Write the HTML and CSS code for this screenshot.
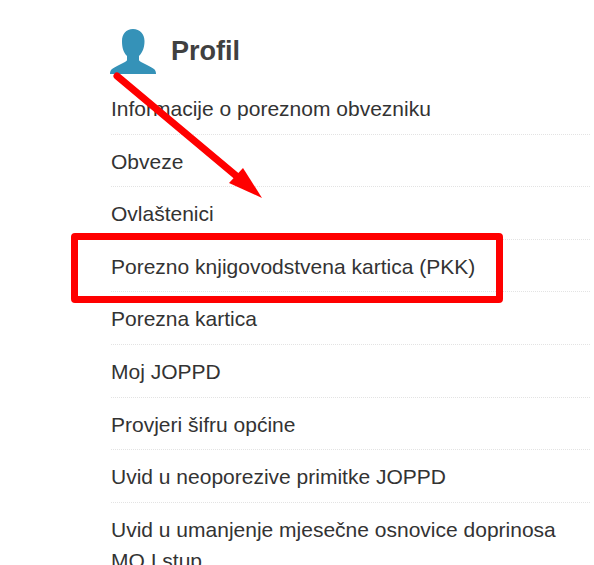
FILE: index.html
```html
<!doctype html>
<html>
  <head>
    <meta charset="UTF-8">
    <meta name="viewport" content="width=device-width, initial-scale=1.0">
    <title>Profil</title>
    <link rel="stylesheet" href="styles.css">
  </head>
  <body>
    <div class="container">
      <div class="header">
        <svg class="user-icon" viewBox="0 0 47 45" width="47" height="45">
          <path d="M23 0C16 0 12 5 12 12C12 18 13 23 17 27V31C17 32 15 33 13 34C9 36 5 38 2 40C0.500 41 0 43 0 45H46C46 43 45.500 41 44 40C41 38 37 36 33 34C31 33 29 32 29 31V27C33 23 34.500 18 34.500 12C34.500 5 30 0 23 0Z"></path>
        </svg>
        <h1>Profil</h1>
      </div>

      <ul class="menu">
        <li>Informacije o poreznom obvezniku</li>
        <li>Obveze</li>
        <li>Ovlaštenici</li>
        <li>Porezno knjigovodstvena kartica (PKK)</li>
        <li>Porezna kartica</li>
        <li>Moj JOPPD</li>
        <li>Provjeri šifru općine</li>
        <li>Uvid u neoporezive primitke JOPPD</li>
        <li>Uvid u umanjenje mjesečne osnovice doprinosa MO I stup</li>
      </ul>
    </div>

    <div class="mark-box"></div>
    <svg class="mark-arrow" viewBox="0 0 594 565" width="594" height="565">
      <line x1="117" y1="76" x2="240" y2="179"></line>
      <polygon points="262,198 229,183 243,168"></polygon>
    </svg>
  </body>
</html>
```

FILE: styles.css
```css
* {
  margin: 0;
  padding: 0;
  box-sizing: border-box;
}

html,
body {
  height: 565px;
  overflow: hidden;
}

body {
  position: relative;
  font-family: "Liberation Sans", Arial, sans-serif;
  color: #333333;
  background: #ffffff;
}

.container {
  padding: 29px 4px 0 111px;
}

.header {
  display: flex;
  align-items: center;
  height: 45px;
  margin-left: -1px;
  margin-bottom: 8px;
}

.user-icon {
  flex: none;
  margin-right: 14px;
}

.user-icon path {
  fill: #3592b8;
}

h1 {
  font-size: 27px;
  font-weight: 700;
  color: #404040;
  margin-top: -1px;
}

.menu {
  list-style: none;
}

.menu li {
  font-size: 21px;
  line-height: 31px;
  padding: 11px 0 9.600px;
  border-bottom: 1px dotted #e3e3e3;
}

.mark-box {
  position: absolute;
  left: 71px;
  top: 233px;
  width: 432px;
  height: 70px;
  border: 7px solid #ff0000;
  border-radius: 4px;
}

.mark-arrow {
  position: absolute;
  left: 0;
  top: 0;
}

.mark-arrow line {
  stroke: #ff0000;
  stroke-width: 7;
  stroke-linecap: round;
}

.mark-arrow polygon {
  fill: #ff0000;
}
```
